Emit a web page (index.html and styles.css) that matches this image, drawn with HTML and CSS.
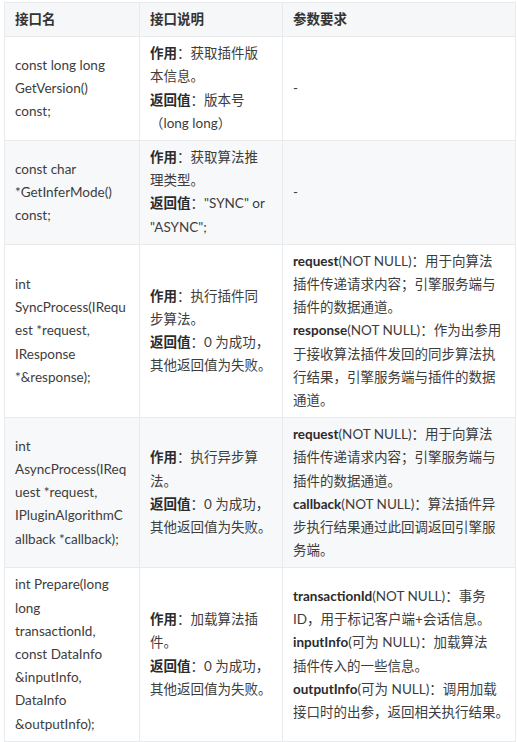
FILE: index.html
```html
<!DOCTYPE html>
<html lang="zh-CN">
<head>
  <meta charset="UTF-8">
  <meta name="viewport" content="width=device-width, initial-scale=1">
  <title>插件接口说明</title>
  <link rel="stylesheet" href="styles.css">
</head>
<body>
  <table class="api-table">
    <colgroup>
      <col class="col-name">
      <col class="col-desc">
      <col class="col-param">
    </colgroup>
    <thead>
      <tr>
        <th>接口名</th>
        <th>接口说明</th>
        <th>参数要求</th>
      </tr>
    </thead>
    <tbody>
      <tr>
        <td>const long long<br>GetVersion()<br>const;</td>
        <td>
          <p><strong>作用</strong>：获取插件版<br>本信息。</p>
          <p><strong>返回值</strong>：版本号<br>（long long）</p>
        </td>
        <td>-</td>
      </tr>
      <tr>
        <td>const char<br>*GetInferMode()<br>const;</td>
        <td>
          <p><strong>作用</strong>：获取算法推<br>理类型。</p>
          <p><strong>返回值</strong>："SYNC" or<br>"ASYNC";</p>
        </td>
        <td>-</td>
      </tr>
      <tr>
        <td>int<br>SyncProcess(IRequ<br>est *request,<br>IResponse<br>*&amp;response);</td>
        <td>
          <p><strong>作用</strong>：执行插件同<br>步算法。</p>
          <p><strong>返回值</strong>：0 为成功，<br>其他返回值为失败。</p>
        </td>
        <td>
          <p><strong>request</strong>(NOT NULL)：用于向算法<br>插件传递请求内容；引擎服务端与<br>插件的数据通道。</p>
          <p><strong>response</strong>(NOT NULL)：作为出参用<br>于接收算法插件发回的同步算法执<br>行结果，引擎服务端与插件的数据<br>通道。</p>
        </td>
      </tr>
      <tr>
        <td>int<br>AsyncProcess(IReq<br>uest *request,<br>IPluginAlgorithmC<br>allback *callback);</td>
        <td>
          <p><strong>作用</strong>：执行异步算<br>法。</p>
          <p><strong>返回值</strong>：0 为成功，<br>其他返回值为失败。</p>
        </td>
        <td>
          <p><strong>request</strong>(NOT NULL)：用于向算法<br>插件传递请求内容；引擎服务端与<br>插件的数据通道。</p>
          <p><strong>callback</strong>(NOT NULL)：算法插件异<br>步执行结果通过此回调返回引擎服<br>务端。</p>
        </td>
      </tr>
      <tr>
        <td>int Prepare(long<br>long<br>transactionId,<br>const DataInfo<br>&amp;inputInfo,<br>DataInfo<br>&amp;outputInfo);</td>
        <td>
          <p><strong>作用</strong>：加载算法插<br>件。</p>
          <p><strong>返回值</strong>：0 为成功，<br>其他返回值为失败。</p>
        </td>
        <td>
          <p><strong>transactionId</strong>(NOT NULL)：事务<br>ID，用于标记客户端+会话信息。</p>
          <p><strong>inputInfo</strong>(可为 NULL)：加载算法<br>插件传入的一些信息。</p>
          <p><strong>outputInfo</strong>(可为 NULL)：调用加载<br>接口时的出参，返回相关执行结果。</p>
        </td>
      </tr>
    </tbody>
  </table>
</body>
</html>
```

FILE: styles.css
```css
body {
  margin: 0;
  background: #fff;
  font-family: Lato, "Noto Sans CJK SC", sans-serif;
  font-size: 13.5px;
  line-height: 23.2px;
  color: #3d3d3d;
}

.api-table {
  width: 512px;
  margin: 2px 0 0 4px;
  border-collapse: collapse;
  table-layout: fixed;
}

.col-name {
  width: 135px;
}

.col-desc {
  width: 143px;
}

.api-table th,
.api-table td {
  border: 1px solid #e9eaec;
  padding: 5px 4px 5px 10px;
  text-align: left;
  vertical-align: middle;
  white-space: nowrap;
}

.api-table th {
  background: #f6f7f8;
  font-weight: bold;
  color: #333;
}

.api-table tbody tr:nth-child(even) {
  background: #f7f8fa;
}

.api-table p {
  margin: 0;
}

.api-table strong {
  color: #2b2b2b;
}
```
